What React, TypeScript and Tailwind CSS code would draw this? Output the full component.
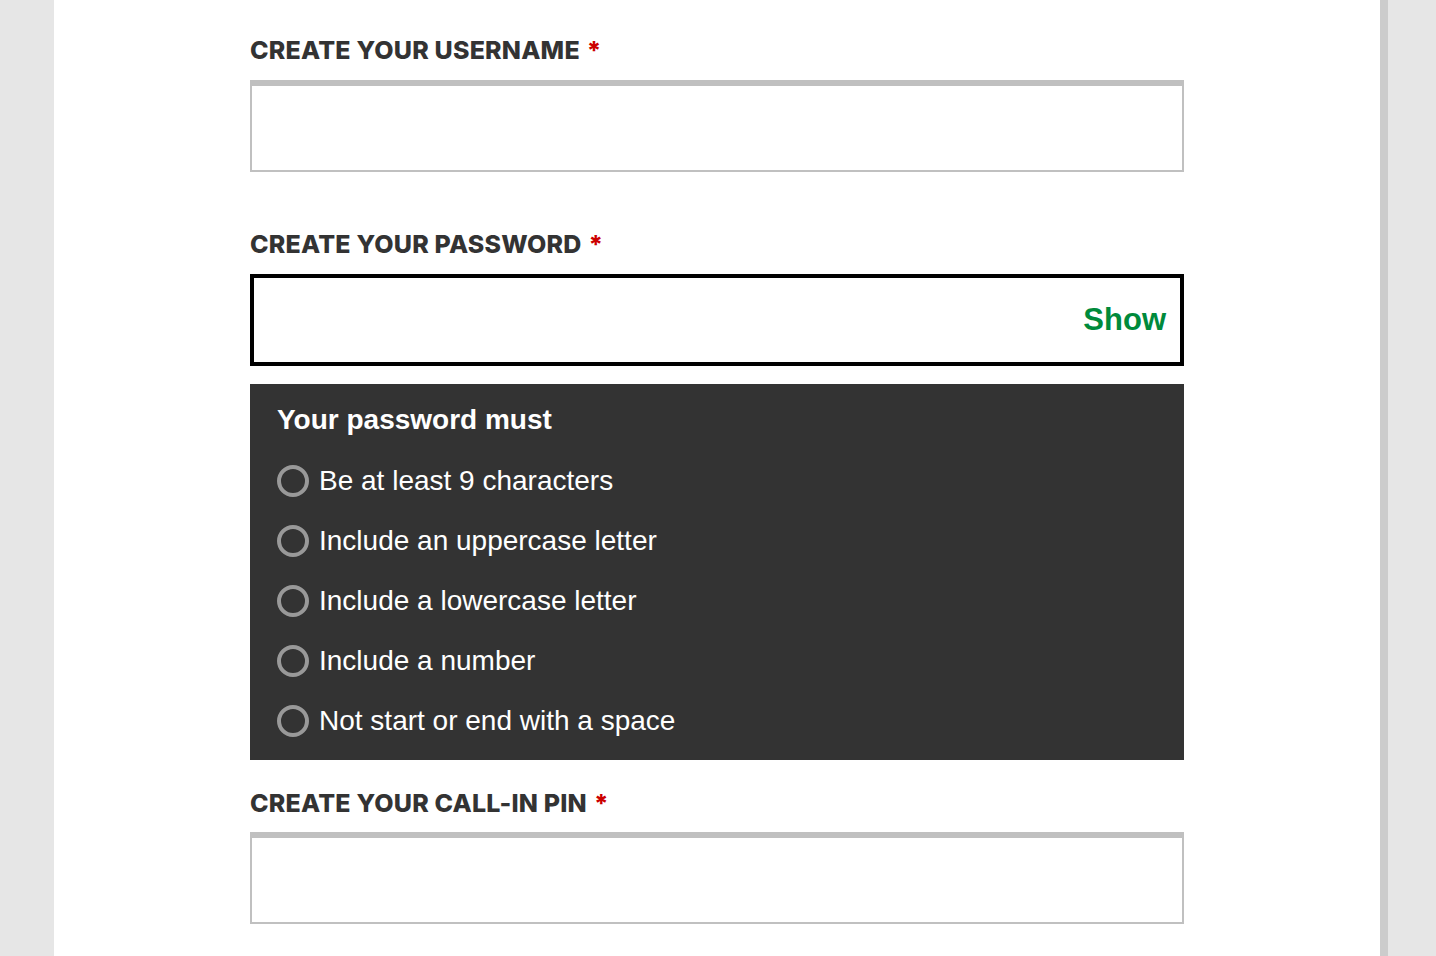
import React from "react";

const labelCls =
  "h-[32px] leading-[32px] text-[25px] font-extrabold text-[#333333] uppercase whitespace-nowrap tracking-[0.2px]";

function Label({ text, className }: { text: string; className?: string }) {
  return (
    <div className={`${labelCls} ${className ?? ""}`} style={{ fontFamily: "Inter, 'Liberation Sans', sans-serif" }}>
      {text}
      <span className="ml-[7px] text-[#cc0000]">*</span>
    </div>
  );
}

function Rule({ text }: { text: string }) {
  return (
    <li className="flex h-[60px] items-center">
      <span className="mr-[10px] box-border h-[32px] w-[32px] rounded-full border-[4px] border-[#999999]" />
      <span className="text-[28px] leading-[32px] text-white">{text}</span>
    </li>
  );
}

export default function App() {
  const rules = [
    "Be at least 9 characters",
    "Include an uppercase letter",
    "Include a lowercase letter",
    "Include a number",
    "Not start or end with a space",
  ];
  return (
    <div className="flex h-[956px] w-full overflow-hidden" style={{ fontFamily: "'Liberation Sans', Arial, sans-serif" }}>
      <div className="w-[54px] shrink-0 bg-[#e6e6e6]" />
      <main className="flex-1 bg-white pl-[196px] pt-[34px]">
        <div className="w-[934px]">
          <Label text="CREATE YOUR USERNAME" className="mb-[14px]" />
          <div className="box-border h-[92px] border-x-2 border-b-2 border-t-[6px] border-[#c0c0c0] bg-white" />

          <Label text="CREATE YOUR PASSWORD" className="mt-[56px] mb-[14px]" />
          <div className="box-border flex h-[92px] items-center justify-end border-4 border-black bg-white pr-[14px]">
            <span className="text-[31px] font-bold text-[#008a3b]">Show</span>
          </div>

          <div className="mt-[18px] box-border h-[376px] bg-[#333333] pl-[27px] pt-[20px]">
            <div className="mb-[15px] text-[28px] font-bold leading-[32px] text-white">Your password must</div>
            <ul>
              {rules.map((r) => (
                <Rule key={r} text={r} />
              ))}
            </ul>
          </div>

          <Label text="CREATE YOUR CALL-IN PIN" className="mt-[27px] mb-[13px]" />
          <div className="box-border h-[92px] border-x-2 border-b-2 border-t-[6px] border-[#c0c0c0] bg-white" />
        </div>
      </main>
      <div className="w-[8px] shrink-0 bg-[#cccccc]" />
      <div className="w-[48px] shrink-0 bg-[#e6e6e6]" />
    </div>
  );
}
